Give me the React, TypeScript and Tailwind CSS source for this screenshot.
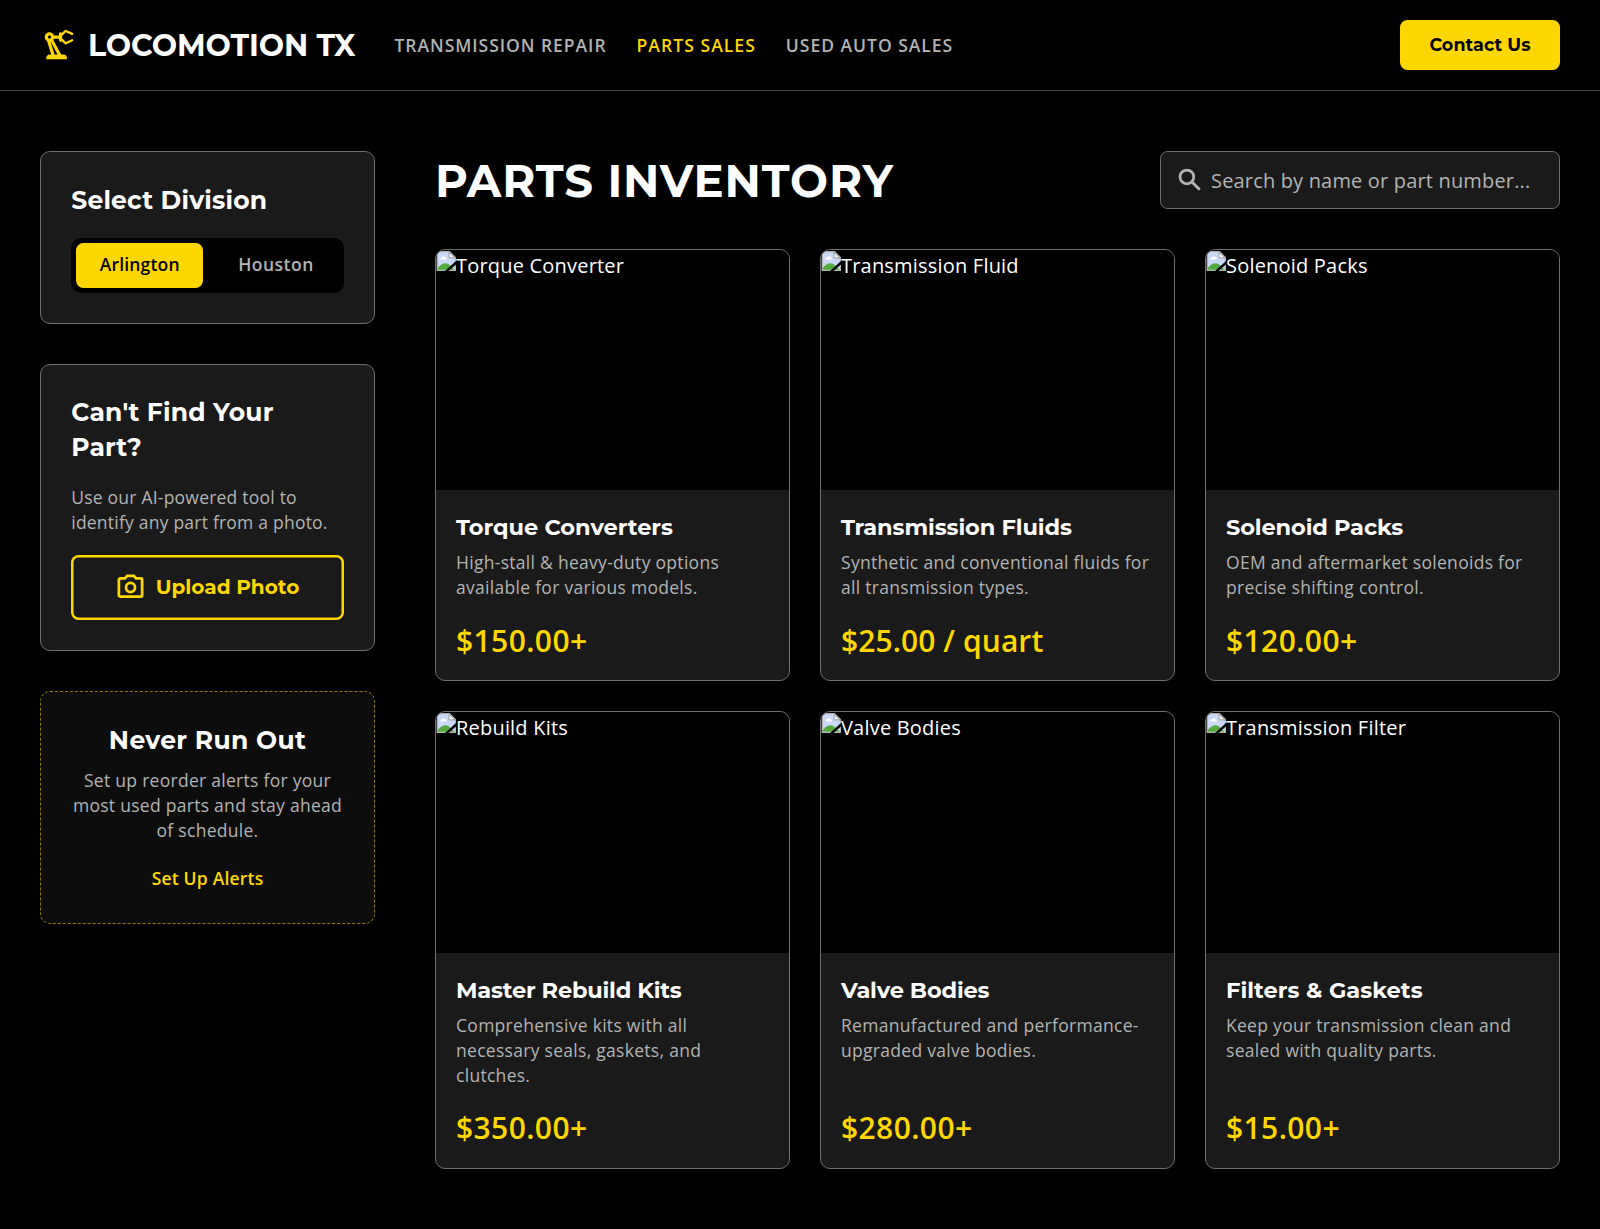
import React from "react";
import { MdOutlinePrecisionManufacturing } from "react-icons/md";

const display = "font-['Montserrat','Open_Sans',sans-serif]";

const parts = [
  { alt: "Torque Converter", name: "Torque Converters", desc: "High-stall & heavy-duty options available for various models.", price: "$150.00+", nameTracking: "tracking-[0px]", priceStyle: "tracking-[0.4px] top-px" },
  { alt: "Transmission Fluid", name: "Transmission Fluids", desc: "Synthetic and conventional fluids for all transmission types.", price: "$25.00 / quart", nameTracking: "tracking-[-0.08px]", priceStyle: "tracking-[0.08px] top-px" },
  { alt: "Solenoid Packs", name: "Solenoid Packs", desc: "OEM and aftermarket solenoids for precise shifting control.", price: "$120.00+", nameTracking: "tracking-[-0.12px]", priceStyle: "tracking-[0.4px] top-px" },
  { alt: "Rebuild Kits", name: "Master Rebuild Kits", desc: "Comprehensive kits with all necessary seals, gaskets, and clutches.", price: "$350.00+", nameTracking: "tracking-[-0.2px]", priceStyle: "tracking-[0.4px]" },
  { alt: "Valve Bodies", name: "Valve Bodies", desc: "Remanufactured and performance-upgraded valve bodies.", price: "$280.00+", nameTracking: "tracking-[-0.17px]", priceStyle: "tracking-[0.4px]" },
  { alt: "Transmission Filter", name: "Filters & Gaskets", desc: "Keep your transmission clean and sealed with quality parts.", price: "$15.00+", nameTracking: "tracking-[0.06px]", priceStyle: "tracking-[0.4px]" },
];

function MissingImage() {
  return (
    <svg width="20" height="20" viewBox="0 0 16 16" className="mt-px block shrink-0">
      <path d="M1 .5h9.800l4.700 4.700V15.500H1z" fill="#c9d9f7" stroke="#b4b4b4" />
      <path d="M3.500 6.300c0-.9.800-1.400 1.600-1.300.3-1 1.900-1 2.300 0 1.100-.1 1.500 1.400.8 1.800H3.900c-.3 0-.4-.3-.4-.5z" fill="#fff" />
      <path d="M1.500 15v-1.500C3.500 11 5.500 9.800 7.500 9.800c2 .1 3.500 1.200 5 3L15 15z" fill="#56ab3e" />
      <path d="M10.500.800v4.700h4.800z" fill="#fff" stroke="#a8a8a8" strokeWidth=".9" />
      <path d="M16 8v2.700L10 16H7.200z" fill="#000" />
    </svg>
  );
}

function CameraIcon() {
  return (
    <svg width="31" height="31" viewBox="0 0 24 24" fill="none" stroke="currentColor" strokeWidth="2.1" className="relative -left-px top-px shrink-0">
      <path d="M4 5h3.600l1.850-2h5.100l1.850 2H20a1 1 0 0 1 1 1v12a1 1 0 0 1-1 1H4a1 1 0 0 1-1-1V6a1 1 0 0 1 1-1z" />
      <circle cx="12" cy="12" r="3.500" />
    </svg>
  );
}

function SearchIcon() {
  return (
    <svg width="30" height="30" viewBox="0 0 24 24" fill="none" stroke="currentColor" className="shrink-0">
      <circle cx="9.500" cy="9.500" r="5.500" strokeWidth="2.200" />
      <path d="M13.400 13.400l6.400 6.400" strokeWidth="2.300" />
    </svg>
  );
}

export default function App() {
  return (
    <div className="min-h-[1229px] bg-black font-['Open_Sans',sans-serif] text-[20px] leading-[30px] text-white">
      <header className="flex h-[91.25px] items-center justify-between border-b border-[#444] px-10">
        <div className="flex items-center gap-[39px]">
          <div className="flex items-center gap-[10px]">
            <MdOutlinePrecisionManufacturing size={38} className="text-[#ffd700]" />
            <span className={`${display} pt-px text-[30px] leading-[40px] font-bold tracking-[-0.07px]`}>LOCOMOTION TX</span>
          </div>
          <nav className="flex gap-[30px] text-[17.5px] leading-[25px] font-semibold text-[#b3b3b3]">
            <a className="tracking-[0.96px]">TRANSMISSION REPAIR</a>
            <a className="tracking-[1.06px] text-[#ffd700]">PARTS SALES</a>
            <a className="tracking-[0.98px]">USED AUTO SALES</a>
          </nav>
        </div>
        <button className={`${display} h-[50px] w-[160px] rounded-[7.5px] bg-[#ffd700] text-[17.5px] font-bold tracking-[0.1px] text-black`}>Contact Us</button>
      </header>

      <main className="grid grid-cols-4 gap-[60px] px-10 py-[60px]">
        <aside className="flex flex-col gap-10">
          <section className="rounded-[10px] border border-[#707070] bg-[#1a1a1a] p-[30.25px]">
            <h2 className={`${display} mb-5 text-[25px] leading-[35px] font-bold tracking-[0.2px]`}>Select Division</h2>
            <div className="flex h-[55px] rounded-[10px] bg-black p-[5px] text-[17.5px] leading-[25px] font-semibold">
              <button className="w-[127px] rounded-[7.5px] bg-[#ffd700] pb-[2px] tracking-[0.18px] text-black">Arlington</button>
              <button className="flex-1 pb-[2px] pl-[10px] tracking-[0.5px] text-[#b3b3b3]">Houston</button>
            </div>
          </section>

          <section className="rounded-[10px] border border-[#707070] bg-[#1a1a1a] p-[30.25px]">
            <h2 className={`${display} mb-5 text-[25px] leading-[35px] font-bold tracking-[0.2px]`}>Can't Find Your Part?</h2>
            <p className="mb-5 text-[17.5px] leading-[25px] tracking-[0.22px] text-[#b3b3b3]">Use our AI-powered tool to identify any part from a photo.</p>
            <button className={`${display} flex h-[65px] w-full items-center justify-center gap-[9px] rounded-[7.5px] pb-[2px] text-[20px] font-bold text-[#ffd700] shadow-[inset_0_0_0_2.5px_#ffd700]`}>
              <CameraIcon />
              Upload Photo
            </button>
          </section>

          <section className="rounded-[10px] border border-dashed border-[#ffd700]/55 bg-[#0d0d0d] p-[30.25px] text-center">
            <h2 className={`${display} mb-[10px] text-[25px] leading-[35px] font-bold tracking-[0.33px]`}>Never Run Out</h2>
            <p className="mb-5 text-[17.5px] leading-[25px] tracking-[0.28px] text-[#b3b3b3]">Set up reorder alerts for your most used parts and stay ahead of schedule.</p>
            <a className="block text-[17.5px] leading-[30px] font-semibold tracking-[0.2px] text-[#ffd700]">Set Up Alerts</a>
          </section>
        </aside>

        <div className="col-span-3">
          <div className="mb-10 flex items-center justify-between">
            <h1 className={`${display} pt-px text-[45px] leading-[50px] font-bold tracking-[0.9px]`}>PARTS INVENTORY</h1>
            <div className="flex h-[57.5px] w-[400px] items-center gap-[6px] rounded-[7.5px] border border-[#707070] bg-[#1a1a1a] pl-[14px] text-[#b3b3b3]">
              <SearchIcon />
              <span className="pt-px tracking-[0.17px]">Search by name or part number...</span>
            </div>
          </div>

          <div className="grid grid-cols-3 gap-[30px]">
            {parts.map((part) => (
              <article key={part.name} className="flex flex-col overflow-hidden rounded-[10px] border border-[#707070] bg-[#1a1a1a]">
                <div className="flex h-[240.25px] items-start bg-black">
                  <MissingImage />
                  <span className="pt-px tracking-[0.2px]">{part.alt}</span>
                </div>
                <div className="flex flex-1 flex-col px-5 pt-5 pb-[20.25px]">
                  <h3 className={`${display} ${part.nameTracking} mb-[5px] text-[22.5px] leading-[35px] font-bold`}>{part.name}</h3>
                  <p className="mb-5 flex-1 text-[17.5px] leading-[25px] tracking-[0.29px] text-[#b3b3b3]">{part.desc}</p>
                  <p className={`${part.priceStyle} relative text-[30px] leading-[40px] font-semibold text-[#ffd700]`}>{part.price}</p>
                </div>
              </article>
            ))}
          </div>
        </div>
      </main>
    </div>
  );
}
